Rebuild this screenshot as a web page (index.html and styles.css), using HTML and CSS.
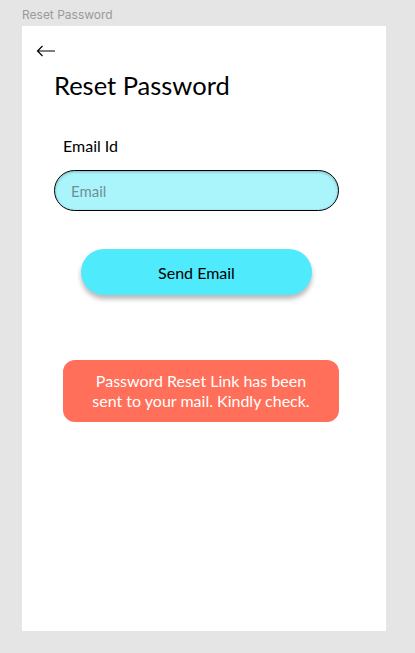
FILE: index.html
```html
<!DOCTYPE html>
<html>
<head>
<meta charset="utf-8">
<link rel="stylesheet" href="styles.css">
</head>
<body>
<div class="frame-label">Reset Password</div>
<div class="frame">
  <button class="back" aria-label="Back">
    <svg width="20" height="12" viewBox="0 0 20 12"><path d="M19 6H1.5M6.5 1L1.5 6l5 5" fill="none" stroke="#000" stroke-width="1.2"/></svg>
  </button>
  <h1 class="title">Reset Password</h1>
  <label class="field-label">Email Id</label>
  <div class="input">Email</div>
  <div class="btn-row"><button class="send">Send Email</button></div>
  <div class="toast">Password Reset Link has been<br>sent to your mail. Kindly check.</div>
</div>
</body>
</html>
```
FILE: styles.css
```css
* { box-sizing: border-box; }
html, body { margin: 0; padding: 0; }
body {
  background: #e5e5e5;
  width: 415px;
  height: 653px;
  overflow: hidden;
  font-family: Lato, "Open Sans", sans-serif;
}
.frame-label {
  font-family: Inter, "Liberation Sans", sans-serif;
  font-size: 12px;
  color: #9a9a9a;
  padding: 8px 0 0 22px;
  height: 26px;
  line-height: 14px;
}
.frame {
  margin-left: 22px;
  width: 364px;
  height: 605px;
  background: #fff;
  display: flex;
  flex-direction: column;
  align-items: flex-start;
}
.back {
  border: 0;
  background: none;
  padding: 0;
  margin: 19px 0 0 14px;
  width: 20px;
  height: 12px;
  display: block;
}
.back svg { display: block; }
.title {
  margin: 12px 0 0 32px;
  font-weight: 400;
  font-size: 25.5px;
  line-height: 32px;
  color: #000;
}
.field-label {
  margin: 35px 0 0 41px;
  font-size: 16px;
  line-height: 20px;
  color: #000;
}
.input {
  margin: 14px 0 0 32px;
  width: 285px;
  height: 41px;
  border: 1px solid #000;
  border-radius: 21px;
  background: #aaf4fc;
  box-shadow: inset 0 1px 3px rgba(0,0,0,0.25);
  padding-left: 16px;
  font-size: 15px;
  line-height: 40px;
  color: #6f9096;
}
.btn-row { margin: 38px 0 0 59px; }
.send {
  width: 231px;
  height: 46px;
  border: 0;
  border-radius: 23px;
  background: #50eafd;
  box-shadow: 0 4px 5px rgba(0,0,0,0.28);
  font-family: Lato, "Open Sans", sans-serif;
  font-size: 16px;
  color: #000;
}
.toast {
  margin: 65px 0 0 41px;
  width: 276px;
  height: 62px;
  border-radius: 12px;
  background: #ff6f59;
  color: #fff;
  font-size: 16px;
  line-height: 20px;
  text-align: center;
  padding-top: 11px;
}
```
